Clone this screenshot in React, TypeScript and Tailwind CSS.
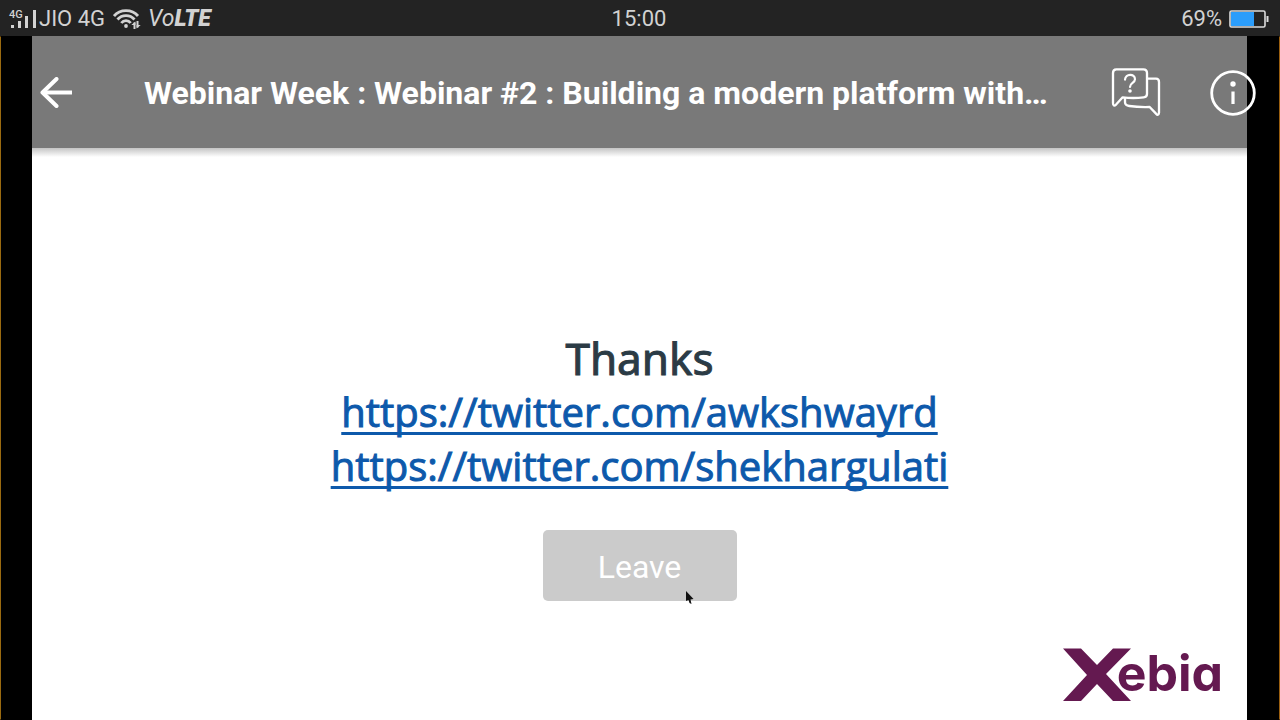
import React from "react";

function SignalBars() {
  return (
    <div className="relative h-[18px] w-[27px]" role="img" aria-label="Signal strength">
      <span className="absolute left-0 top-0 text-[11px] leading-[9px] font-medium">4G</span>
      <svg viewBox="0 0 27 18" className="h-[18px] w-[27px]" fill="currentColor" aria-hidden="true">
        <rect x="2" y="15" width="3" height="3" />
        <rect x="9" y="11" width="3" height="7" />
        <rect x="16" y="6" width="3" height="12" />
        <rect x="24" y="0" width="3" height="18" />
      </svg>
    </div>
  );
}

function WifiIcon() {
  return (
    <svg viewBox="0 0 28 21" className="h-[21px] w-[28px]" fill="none" stroke="currentColor" strokeWidth="2.800" role="img" aria-label="Wi-Fi">
      <path d="M1 7 C7 -0.300 19 -0.300 25 7" />
      <path d="M4.500 10.500 C9 5.200 17 5.200 21.500 10.500" />
      <path d="M8.300 14 C10.800 10.800 15.200 10.800 17.700 14" />
      <circle cx="13" cy="17" r="1.900" fill="currentColor" stroke="none" />
      <path d="M21.500 20 V13.500 M24.500 12 V18.500" strokeWidth="2" />
      <path d="M18.300 16 L22.400 12.500 V16 Z M23.600 16 H27.700 L23.600 19.500 Z" fill="currentColor" stroke="none" />
    </svg>
  );
}

function StatusBar() {
  return (
    <div className="grid h-9 grid-cols-[1fr_auto_1fr] items-center bg-[#232323] pl-[9px] pr-[11px] pt-[2px] text-[22px] leading-8 text-[#d2d2d2]">
      <div className="flex items-center">
        <SignalBars />
        <span className="ml-[3px]">JIO 4G</span>
        <span className="ml-2">
          <WifiIcon />
        </span>
        <span className="ml-[7px] text-[23px] italic">
          Vo<b className="font-black">LTE</b>
        </span>
      </div>
      <time>15:00</time>
      <div className="flex items-center justify-end gap-[7px]">
        <span>69%</span>
        <svg viewBox="0 0 40 19" className="h-[19px] w-10" role="img" aria-label="Battery">
          <rect x="1" y="1" width="35" height="16" rx="1.500" fill="none" stroke="#dcdcdc" strokeWidth="1.600" />
          <rect x="2" y="2" width="23" height="14" fill="#2b9dfb" />
          <rect x="37.500" y="6" width="2" height="6" fill="#dcdcdc" />
        </svg>
      </div>
    </div>
  );
}

function QuestionsIcon() {
  return (
    <svg viewBox="63 53 150 150" className="size-[50px]" fill="none" stroke="currentColor" strokeWidth="7" strokeLinecap="round" strokeLinejoin="round" aria-hidden="true">
      <path d="M79 57 H160 Q171 57 171 68 V131 Q171 140 161 141 Q130 145 98 141 L79 162 Q69 171 69 158 V68 Q69 57 79 57 Z" />
      <path d="M173 85 H198 Q207 85 207 95 V187 Q205 198 198 190 L179 170 Q145 171 118 167 Q105 165 105 156 V144" />
      <path d="M105 88 C106 69 135 69 135 87 C135 98 120 98 120 110" strokeWidth="6.500" />
      <circle cx="120" cy="122" r="5.500" fill="currentColor" stroke="none" />
    </svg>
  );
}

function InfoIcon() {
  return (
    <svg viewBox="0 0 46 46" className="size-[46px]" fill="none" stroke="currentColor" strokeWidth="2.800" aria-hidden="true">
      <circle cx="23" cy="23" r="21.300" />
      <circle cx="23" cy="14" r="2.700" fill="currentColor" stroke="none" />
      <path d="M23 21.500 V34" strokeWidth="3.200" />
    </svg>
  );
}

function Toolbar() {
  return (
    <header className="relative flex h-28 items-center border-l-[32px] border-r-[33px] border-black bg-[#797979] pt-px pl-2 text-white">
      <button type="button" aria-label="Back" className="shrink-0">
        <svg viewBox="0 0 32 32" className="size-8" fill="none" stroke="currentColor" strokeWidth="4" aria-hidden="true">
          <path d="M32 15.500 H3" />
          <path d="M16.500 2 L2.500 15.500 L16.500 29" strokeLinecap="round" strokeLinejoin="round" />
        </svg>
      </button>
      <h1 className="ml-[72px] min-w-0 flex-1 truncate text-[32px] leading-10 font-bold">
        Webinar Week : Webinar #2 : Building a modern platform with…
      </h1>
      <div className="-mr-[9px] flex shrink-0 items-center gap-[49px]">
        <button type="button" aria-label="Questions">
          <QuestionsIcon />
        </button>
        <button type="button" aria-label="Information">
          <InfoIcon />
        </button>
      </div>
    </header>
  );
}

function XebiaLogo() {
  return (
    <div className="flex items-start text-[#641950]" role="img" aria-label="Xebia">
      <svg viewBox="0 0 69 54" className="h-[54px] w-[69px]" fill="currentColor" aria-hidden="true">
        <path d="M0 0.500 H18 L34 17 L50 0.500 H68 L43 26 L68 53 H50 L34 36 L18 53 H0 L24 27 Z" />
      </svg>
      <span className="-ml-[15px] font-[Inter,sans-serif] text-[50px] leading-[50px] font-bold [font-feature-settings:'cv11'_1]">ebia</span>
    </div>
  );
}

function Slide() {
  const link =
    "text-[#0d59ab] underline decoration-[3px] underline-offset-[5px] [text-decoration-skip-ink:none] [-webkit-text-stroke:1px_#0d59ab]";
  return (
    <main className="flex flex-1 flex-col items-center border-l-[32px] border-r-[33px] border-black bg-white bg-[linear-gradient(#c4c4c4,#ffffff_9px)]">
      <div className="mt-[183px] text-center font-['Open_Sans',sans-serif] text-[40px] leading-[54px]">
        <h2 className="font-['Noto_Sans',sans-serif] text-[44px] font-normal text-[#2b3b45] [-webkit-text-stroke:1px_#2b3b45]">Thanks</h2>
        <p>
          <a href="https://twitter.com/awkshwayrd" className={link}>https://twitter.com/awkshwayrd</a>
        </p>
        <p>
          <a href="https://twitter.com/shekhargulati" className={link}>https://twitter.com/shekhargulati</a>
        </p>
      </div>
      <div className="relative mt-[37px]">
        <button type="button" className="h-[71px] w-[194px] rounded-[5px] bg-[#cbcbcb] pt-[3px] text-[32px] leading-10 text-white">
          Leave
        </button>
        <svg viewBox="0 0 12 17" className="absolute -bottom-1 left-[142px] h-[17px] w-3" aria-hidden="true">
          <path d="M1 3 L8.500 11 L5.500 11.500 L6.500 16 L4.500 15 L3.500 12 L1 13 Z" fill="#111111" />
        </svg>
      </div>
      <div className="mt-auto mr-6 mb-[18px] self-end">
        <XebiaLogo />
      </div>
    </main>
  );
}

export default function App() {
  return (
    <div className="flex min-h-screen flex-col bg-black font-[Roboto,sans-serif]">
      <StatusBar />
      <div className="relative flex flex-1 flex-col">
        <Toolbar />
        <Slide />
        <div className="pointer-events-none absolute inset-0 border border-t-transparent border-r-[#9a5f10] border-b-transparent border-l-[#9a6a10]" />
      </div>
    </div>
  );
}
